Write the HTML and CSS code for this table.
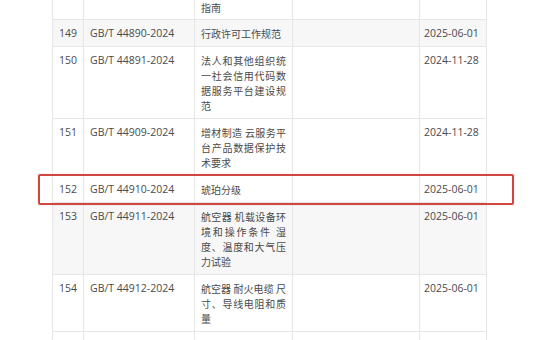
FILE: index.html
```html
<!DOCTYPE html>
<html lang="zh-CN">
<head>
<meta charset="utf-8">
<link rel="stylesheet" href="styles.css">
</head>
<body>
<div class="page">
  <table class="std">
    <colgroup>
      <col class="c-no"><col class="c-code"><col class="c-name"><col class="c-rep"><col class="c-date">
    </colgroup>
    <tbody>
      <tr class="first">
        <td></td><td></td><td class="name">指南</td><td></td><td class="date"></td>
      </tr>
      <tr class="alt">
        <td>149</td><td>GB/T 44890-2024</td><td class="name">行政许可工作规范</td><td></td><td class="date">2025-06-01</td>
      </tr>
      <tr>
        <td>150</td><td>GB/T 44891-2024</td><td class="name">法人和其他组织统一社会信用代码数据服务平台建设规范</td><td></td><td class="date">2024-11-28</td>
      </tr>
      <tr>
        <td>151</td><td>GB/T 44909-2024</td><td class="name">增材制造 云服务平台产品数据保护技术要求</td><td></td><td class="date">2024-11-28</td>
      </tr>
      <tr>
        <td>152</td><td>GB/T 44910-2024</td><td class="name">琥珀分级</td><td></td><td class="date">2025-06-01</td>
      </tr>
      <tr class="alt">
        <td>153</td><td>GB/T 44911-2024</td><td class="name">航空器 机载设备环境和操作条件 湿度、温度和大气压力试验</td><td></td><td class="date">2025-06-01</td>
      </tr>
      <tr>
        <td>154</td><td>GB/T 44912-2024</td><td class="name">航空器 耐火电缆 尺寸、导线电阻和质量</td><td></td><td class="date">2025-06-01</td>
      </tr>
      <tr>
        <td></td><td></td><td class="name"></td><td></td><td class="date"></td>
      </tr>
    </tbody>
  </table>
  <div class="mark"></div>
</div>
</body>
</html>
```

FILE: styles.css
```css
html, body {
  margin: 0;
  padding: 0;
  background: #ffffff;
}
.page {
  position: relative;
  width: 550px;
  height: 340px;
  overflow: hidden;
  padding-left: 52px;
  box-sizing: border-box;
}
.std {
  border-collapse: collapse;
  table-layout: fixed;
  width: 435px;
  margin-top: -1px;
  font-family: "Open Sans", "Noto Sans CJK SC", sans-serif;
  font-size: 10.5px;
  line-height: 15px;
  color: #4a4a4a;
}
.c-no { width: 31px; }
.c-code { width: 111px; }
.c-name { width: 98px; }
.c-rep { width: 127px; }
.c-date { width: 67px; }
.std td {
  border: 1px solid #e6e6e6;
  padding: 6px 6px 5px 6px;
  vertical-align: top;
  text-align: left;
}
.std tr.first td {
  padding-top: 0;
  padding-bottom: 4px;
}
.std td.name {
  text-align: justify;
  font-family: "Noto Sans CJK SC", sans-serif;
  font-size: 10px;
  line-height: 15px;
}
.std td.date {
  padding-left: 4px;
  padding-right: 3px;
}
.std tr.alt td {
  background: #f7f7f7;
}
.mark {
  position: absolute;
  left: 38px;
  top: 174px;
  width: 476px;
  height: 31px;
  box-sizing: border-box;
  border: 2px solid #cf4740;
  border-radius: 2px;
  box-shadow: 0 0 1px rgba(207, 71, 64, 0.5);
}
```
